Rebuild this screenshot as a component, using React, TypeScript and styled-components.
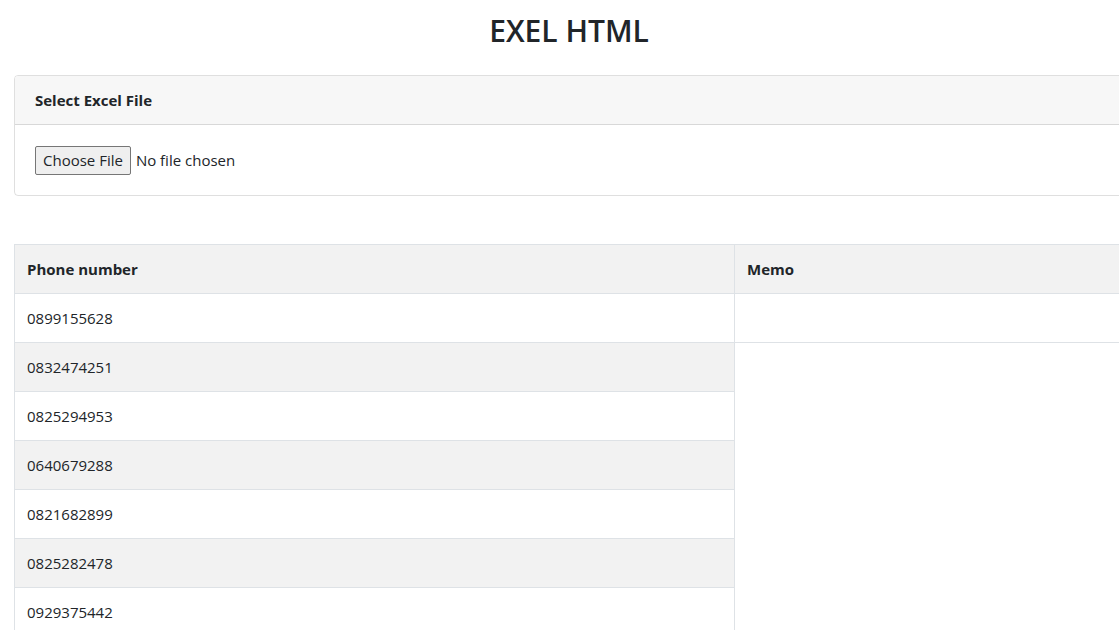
import React from "react";
import styled, { createGlobalStyle } from "styled-components";

const GlobalStyle = createGlobalStyle`
    html, body {
        margin: 0;
        padding: 0;
        height: 630px;
        overflow: hidden;
        background: #fff;
    }
    body {
        font-family: "Open Sans", "Noto Sans", sans-serif;
        font-size: 15px;
        line-height: 24px;
        color: #212529;
    }
`;

const Page = styled.div`
    width: 1138px;
    padding: 0 14px;
    box-sizing: border-box;
`;

const Title = styled.h2`
    margin: 12px 0 25px;
    font-size: 30px;
    line-height: 38px;
    font-weight: 600;
    text-align: center;
`;

const Card = styled.div`
    border: 1px solid rgba(0, 0, 0, 0.125);
    border-radius: 4px;
    overflow: hidden;
`;

const CardHeader = styled.div`
    padding: 12px 20px;
    background: #f7f7f7;
    border-bottom: 1px solid rgba(0, 0, 0, 0.125);
    font-weight: 700;
`;

const CardBody = styled.div`
    padding: 20px;
    display: flex;
    align-items: center;
    height: 30px;
`;

const FileButton = styled.button`
    font-family: inherit;
    font-size: 15px;
    line-height: 20px;
    height: 29px;
    padding: 0 7px;
    background: #efefef;
    border: 1px solid #767676;
    border-radius: 2px;
    color: #212529;
`;

const FileLabel = styled.span`
    margin-left: 5px;
`;

const Table = styled.table`
    margin-top: 48px;
    width: 100%;
    border-collapse: collapse;
    border: 1px solid #dee2e6;
`;

const Th = styled.th`
    text-align: left;
    font-weight: 700;
    padding: 12px;
    border: 1px solid #dee2e6;
    background: #f2f2f2;
`;

const Row = styled.tr<{ $striped: boolean }>`
    background: ${props => props.$striped ? "#f2f2f2" : "#fff"};
`;

const Td = styled.td`
    padding: 12px;
    height: 24px;
    border: 1px solid #dee2e6;
`;

const phones = [
    "0899155628",
    "0832474251",
    "0825294953",
    "0640679288",
    "0821682899",
    "0825282478",
    "0929375442",
];

export default function App() {
    return (
        <Page>
            <GlobalStyle />
            <Title>EXEL HTML</Title>
            <Card>
                <CardHeader>Select Excel File</CardHeader>
                <CardBody>
                    <FileButton type="button">Choose File</FileButton>
                    <FileLabel>No file chosen</FileLabel>
                </CardBody>
            </Card>
            <Table>
                <thead>
                    <tr>
                        <Th style={{ width: 695 }}>Phone number</Th>
                        <Th>Memo</Th>
                    </tr>
                </thead>
                <tbody>
                    {phones.map((p, i) => (
                        <Row key={p} $striped={i % 2 === 1}>
                            <Td>{p}</Td>
                            {i === 0 && <Td></Td>}
                        </Row>
                    ))}
                </tbody>
            </Table>
        </Page>
    );
}
